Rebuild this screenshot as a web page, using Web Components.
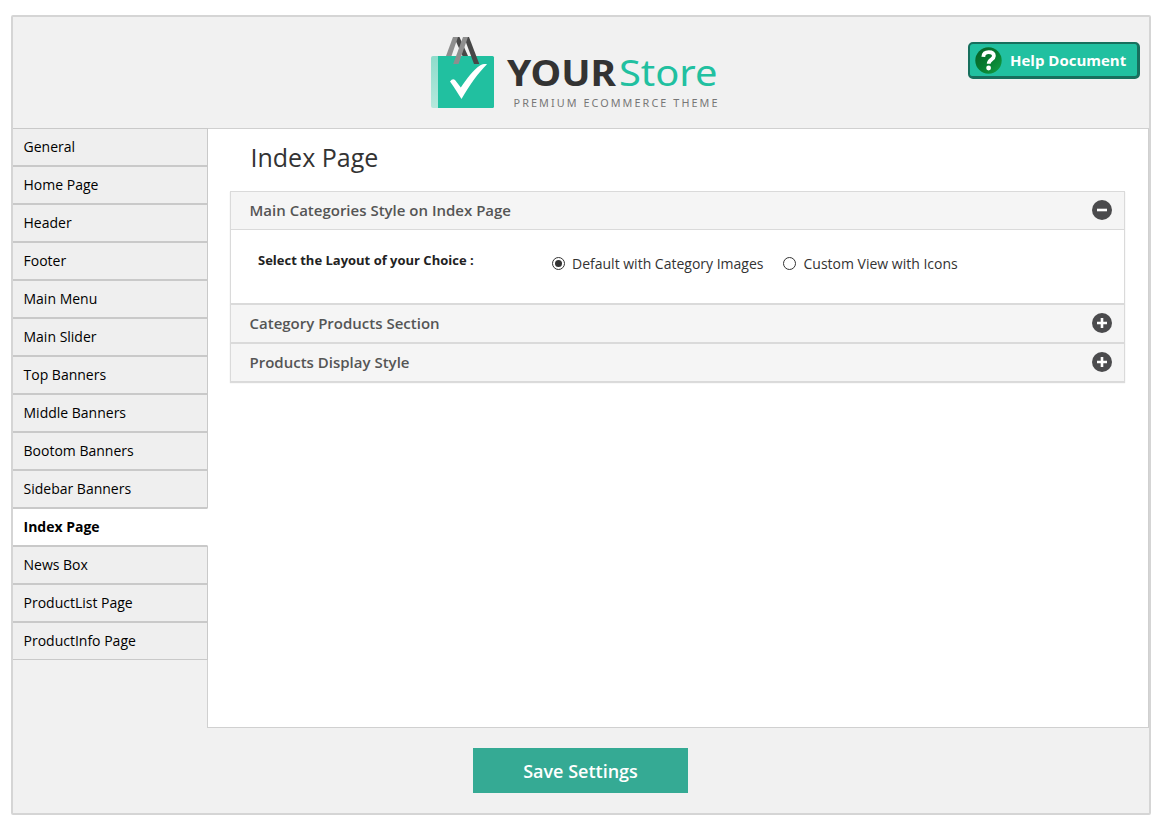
<!DOCTYPE html>
<html lang="en">
<head>
<meta charset="utf-8">
<title>YourStore Theme Settings</title>
<style>
html,body{margin:0;padding:0;background:#fff}
body{font-family:"Open Sans",sans-serif;padding:15px 0 0 11px}
</style>
</head>
<body>
<settings-page></settings-page>
<script>
const define = (name, html, setup) => customElements.define(name, class extends HTMLElement {
  connectedCallback() {
    if (this.shadowRoot) return;
    const t = document.createElement('template');
    t.innerHTML = html;
    this.attachShadow({mode: 'open'}).append(t.content.cloneNode(true));
    if (setup) setup(this, this.shadowRoot);
  }
});

define('store-logo', `
<style>:host{display:block;width:290px;height:76px}svg{display:block}</style>
<svg width="290" height="76" viewBox="430 35 290 76">
  <defs><linearGradient id="side" x1="0" y1="0" x2="0" y2="1"><stop offset="0" stop-color="#8edccb"/><stop offset="1" stop-color="#b5e8dc"/></linearGradient></defs>
  <path d="M433 56h6v52h-6a2 2 0 0 1-2-2V58a2 2 0 0 1 2-2z" fill="url(#side)"/>
  <path d="M454 37h5.500l8.500 19h-5.500z" fill="#474747"/>
  <path d="M453 37h5l-6.500 19h-5.500z" fill="#8e8e8e"/>
  <path d="M438 56h54.500a1.500 1.500 0 0 1 1.500 1.500v49a1.500 1.500 0 0 1-1.500 1.500H438z" fill="#21c0a0"/>
  <path d="M464 37h5l10.300 27h-5.300z" fill="#474747"/>
  <path d="M463 37h5l-9.500 27h-5.300z" fill="#8e8e8e"/>
  <path d="M450 81.500q2.500-3.500 5-1.500l5.800 7.500c6-9 12.700-17.500 19.200-22 2.500-1.500 5-1.500 7-1.300-9 9-17 20-25.500 34.800-3.500-5-7.500-12.500-11.500-17.500z" fill="#fff"/>
  <text x="507" y="86" font-family="Noto Sans,sans-serif" font-weight="700" font-size="36.500" textLength="109" lengthAdjust="spacingAndGlyphs" fill="#333">YOUR</text>
  <text x="619" y="86" font-family="Noto Sans,sans-serif" font-size="36.500" textLength="98.500" lengthAdjust="spacingAndGlyphs" fill="#21c0a0">Store</text>
  <text x="513.500" y="107" font-family="Noto Sans,sans-serif" font-size="10.800" textLength="204" lengthAdjust="spacing" fill="#777">PREMIUM ECOMMERCE THEME</text>
</svg>`);

define('help-button', `
<style>
:host{display:block}
button{box-sizing:border-box;width:172px;height:37px;display:flex;align-items:center;gap:8px;padding:0 0 0 5px;margin:0 1px 0 0;border:2px solid #176f5d;border-right-width:3px;border-bottom-width:3px;border-radius:5px;background:#21c0a0;color:#fff;font:700 15px "Open Sans",sans-serif;white-space:nowrap}
svg{flex:none;display:block}
span{line-height:20px}
</style>
<button><svg width="27" height="27" viewBox="0 0 27 27">
<defs><linearGradient id="g" x2="1" y2="1"><stop offset="0" stop-color="#075e27"/><stop offset=".5" stop-color="#067b30"/><stop offset="1" stop-color="#149f43"/></linearGradient></defs>
<circle cx="13.500" cy="13.500" r="13.200" fill="url(#g)"/>
<path d="M8.300 9.800c.3-3.400 2.500-4.600 5.400-4.600 3.200 0 5.200 1.500 5.200 3.900 0 3.400-5.200 3.600-5.200 7.700" fill="none" stroke="#fff" stroke-width="3.800"/>
<circle cx="13.600" cy="21" r="2.400" fill="#fff"/></svg><span><slot></slot></span></button>`);

define('nav-item', `
<style>
:host{display:flex;align-items:center;box-sizing:border-box;height:38px;padding:0 0 1px 10.500px;border:1px solid #c9c9c9;border-left:0;background:#efefef;color:#000;font-size:14px;line-height:20px}
:host([active]){background:#fff;border-right-color:#fff;font-weight:700}
</style><slot></slot>`);

define('round-icon', `
<style>:host{display:block;width:20px;height:20px}svg{display:block}</style>
<svg width="20" height="20"><circle cx="10" cy="10" r="10" fill="#4b4b4d"/><path stroke="#fff" stroke-width="2.600"/></svg>`,
(el, root) => root.querySelector('path').setAttribute('d', el.hasAttribute('minus') ? 'M5 10h10' : 'M5 10h10M10 5v10'));

define('accordion-item', `
<style>
:host{display:block;box-sizing:border-box;border:1px solid #dadada;background:#fff;box-shadow:0 1px 1px rgba(0,0,0,.14)}
header{box-sizing:border-box;height:37px;display:flex;align-items:center;justify-content:space-between;padding:0 12px 2px 18.500px;background:#f5f5f5;color:#555;font-size:15px;font-weight:600;line-height:20px}
:host([open]) header{height:38px;padding-bottom:2px;border-bottom:1px solid #dadada}
section{display:none}
:host([open]) section{display:block;height:73px}
</style>
<header><span><slot name="title"></slot></span><slot name="icon"></slot></header><section><slot></slot></section>`);

define('radio-option', `
<style>
:host{display:flex;align-items:center;gap:7px;font-size:14px;line-height:20px;color:#333;white-space:nowrap}
i{box-sizing:border-box;width:13px;height:13px;margin-bottom:1px;border:1px solid #333;border-radius:50%;background:#fff;display:grid;place-items:center}
:host([checked]) i::after{content:"";width:7px;height:7px;border-radius:50%;background:#333}
</style><i></i><span><slot></slot></span>`);

define('layout-field', `
<style>
:host{display:flex;padding:20px 0 0 27px}
b{width:294px;font-size:13px;line-height:20px;color:#222;white-space:nowrap}
div{display:flex;gap:20px;padding-top:4px}
</style><b>Select the Layout of your Choice :</b><div><slot></slot></div>`);

define('save-button', `
<style>:host{display:block}button{display:block;box-sizing:border-box;width:215px;height:45px;margin:0;padding:2px 0 0;border:0;background:#35aa94;color:#fff;font:600 18px/43px "Open Sans",sans-serif}</style>
<button><slot></slot></button>`);

define('settings-page', `
<style>
:host{display:flex;flex-direction:column;box-sizing:border-box;width:1140px;height:800px;border:2px solid #d5d5d5;border-radius:2px;background:#f1f1f1}
.top{height:111px;display:grid;grid-template-columns:417px 1fr auto;padding-right:8px;box-sizing:border-box}
.top store-logo{margin-top:18px}
.top help-button{margin-top:25px}
.mid{display:flex;height:600px}
nav{width:195px;position:relative;z-index:1}
main{box-sizing:border-box;flex:1;margin-left:-1px;border:1px solid #d0d0d0;background:#fff;padding:0 23px 0 22px}
h1{margin:11px 0 17px 20.500px;font-size:25px;font-weight:400;line-height:34px;color:#333}
footer{display:flex;padding:20px 0 0 460px}
</style>
<div class="top"><span></span><store-logo></store-logo><help-button>Help Document</help-button></div>
<div class="mid">
<nav></nav>
<main><h1>Index Page</h1>
<accordion-item open><span slot="title">Main Categories Style on Index Page</span><round-icon slot="icon" minus></round-icon>
<layout-field><radio-option checked>Default with Category Images</radio-option><radio-option>Custom View with Icons</radio-option></layout-field></accordion-item>
<accordion-item><span slot="title">Category Products Section</span><round-icon slot="icon"></round-icon></accordion-item>
<accordion-item><span slot="title">Products Display Style</span><round-icon slot="icon"></round-icon></accordion-item>
</main></div>
<footer><save-button>Save Settings</save-button></footer>`,
(el, root) => {
  const nav = root.querySelector('nav');
  for (const name of ['General','Home Page','Header','Footer','Main Menu','Main Slider','Top Banners','Middle Banners','Bootom Banners','Sidebar Banners','Index Page','News Box','ProductList Page','ProductInfo Page']) {
    const item = document.createElement('nav-item');
    item.textContent = name;
    if (name === 'Index Page') item.setAttribute('active', '');
    nav.append(item);
  }
});
</script>
</body>
</html>
